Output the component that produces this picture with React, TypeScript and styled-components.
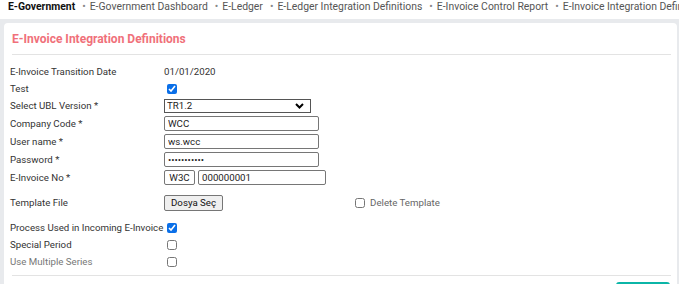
import React from "react";
import styled, { createGlobalStyle } from "styled-components";

const GlobalStyle = createGlobalStyle`
  html, body {
    margin: 0;
    padding: 0;
    background: #e8eaed;
    font-family: Roboto, "Noto Sans", sans-serif;
    color: #333;
  }
`;

const Page = styled.div`
  width: 679px;
  height: 284px;
  overflow: hidden;
`;

const Crumbs = styled.div`
  display: flex;
  align-items: flex-start;
  height: 19px;
  padding: 1px 0 0 8px;
  box-sizing: border-box;
  font-size: 10.4px;
  line-height: 12px;
  white-space: nowrap;
  overflow: hidden;
  background: #fff;
`;

const Crumb = styled.span<{ $root?: boolean }>`
  color: ${(p) => (p.$root ? "#111" : "#555")};
  font-weight: ${(p) => (p.$root ? 700 : 400)};
  &:not(:first-child)::before {
    content: "•";
    color: #888;
    margin: 0 4px 0 7px;
  }
`;

const Card = styled.div`
  margin: 4px 2px 0 4px;
  background: #fff;
  border-radius: 4px;
  height: 300px;
`;

const Title = styled.h2`
  margin: 0;
  padding: 8px 8px 7px;
  font-size: 12px;
  line-height: 16px;
  font-weight: 700;
  color: #f0707a;
`;

const Divider = styled.div<{ $top?: number }>`
  margin: ${(p) => p.$top ?? 0}px 6px 0 8px;
  border-top: 1px solid #e3e3e3;
`;

const Form = styled.div`
  padding: 8px 6px 0;
`;

const Row = styled.div<{ $h: number; $mt?: number }>`
  display: flex;
  align-items: center;
  height: ${(p) => p.$h}px;
  margin-top: ${(p) => p.$mt ?? 0}px;
  font-size: 9.7px;
`;

const Label = styled.div<{ $muted?: boolean }>`
  width: 154px;
  flex: none;
  white-space: nowrap;
  color: ${(p) => (p.$muted ? "#777" : "#333")};
`;

const Value = styled.div`
  display: flex;
  align-items: center;
  gap: 3px;
`;

const Input = styled.input<{ $w: number; $center?: boolean }>`
  box-sizing: border-box;
  width: ${(p) => p.$w}px;
  height: 15px;
  margin: 0;
  padding: 0 3px;
  border: 1px solid #767676;
  border-radius: 2px;
  font-family: Roboto, sans-serif;
  font-size: 9.7px;
  color: #222;
  text-align: ${(p) => (p.$center ? "center" : "left")};
  outline: none;
`;

const Select = styled.select`
  box-sizing: border-box;
  width: 147px;
  height: 14px;
  margin: 0;
  padding: 0 2px;
  border: 1px solid #555;
  border-radius: 0;
  font-family: Roboto, sans-serif;
  font-size: 9.7px;
  color: #222;
  background: #fff;
  appearance: none;
  background-image: url("data:image/svg+xml;utf8,<svg xmlns='http://www.w3.org/2000/svg' width='9' height='6' viewBox='0 0 9 6'><path d='M1 1 L4.5 4.5 L8 1' fill='none' stroke='black' stroke-width='2'/></svg>");
  background-repeat: no-repeat;
  background-position: right 6px center;
`;

const Check = styled.input.attrs({ type: "checkbox" })`
  width: 10px;
  height: 10px;
  margin: 0 0 0 3px;
  accent-color: #0a6fe8;
`;

const FileButton = styled.button`
  box-sizing: border-box;
  height: 16px;
  padding: 0 6px;
  border: 1px solid #767676;
  border-radius: 2px;
  background: #efefef;
  font-family: Roboto, sans-serif;
  font-size: 9.7px;
  color: #111;
`;

const DeleteTemplate = styled.label`
  display: flex;
  align-items: center;
  gap: 5px;
  margin-left: 132px;
  color: #666;
  font-size: 9.7px;
`;

const Footer = styled.div`
  display: flex;
  justify-content: flex-end;
  padding: 6px 7px 0 0;
`;

const SaveButton = styled.div`
  width: 54px;
  height: 20px;
  background: #0bb5a7;
  border-radius: 3px;
`;

export default function App() {
  return (
    <Page>
      <GlobalStyle />
      <Crumbs>
        <Crumb $root>E-Government</Crumb>
        <Crumb>E-Government Dashboard</Crumb>
        <Crumb>E-Ledger</Crumb>
        <Crumb>E-Ledger Integration Definitions</Crumb>
        <Crumb>E-Invoice Control Report</Crumb>
        <Crumb>E-Invoice Integration Definitions</Crumb>
      </Crumbs>
      <Card>
        <Title>E-Invoice Integration Definitions</Title>
        <Divider />
        <Form>
          <Row $h={17}>
            <Label>E-Invoice Transition Date</Label>
            <Value>01/01/2020</Value>
          </Row>
          <Row $h={17}>
            <Label>Test</Label>
            <Check defaultChecked />
          </Row>
          <Row $h={17}>
            <Label>Select UBL Version *</Label>
            <Select defaultValue="TR1.2">
              <option>TR1.2</option>
            </Select>
          </Row>
          <Row $h={18}>
            <Label>Company Code *</Label>
            <Input $w={155} defaultValue="WCC" />
          </Row>
          <Row $h={18}>
            <Label>User name *</Label>
            <Input $w={155} defaultValue="ws.wcc" />
          </Row>
          <Row $h={18}>
            <Label>Password *</Label>
            <Input $w={155} type="password" defaultValue="12345678901" />
          </Row>
          <Row $h={19}>
            <Label>E-Invoice No *</Label>
            <Value>
              <Input $w={31} $center defaultValue="W3C" />
              <Input $w={128} defaultValue="000000001" />
            </Value>
          </Row>
          <Row $h={17} $mt={7}>
            <Label>Template File</Label>
            <FileButton>Dosya Seç</FileButton>
            <DeleteTemplate>
              <Check style={{ margin: 0 }} />
              Delete Template
            </DeleteTemplate>
          </Row>
          <Row $h={17} $mt={8}>
            <Label>Process Used in Incoming E-Invoice</Label>
            <Check defaultChecked />
          </Row>
          <Row $h={17}>
            <Label>Special Period</Label>
            <Check />
          </Row>
          <Row $h={17}>
            <Label $muted>Use Multiple Series</Label>
            <Check />
          </Row>
        </Form>
        <Divider $top={5} />
        <Footer>
          <SaveButton />
        </Footer>
      </Card>
    </Page>
  );
}
